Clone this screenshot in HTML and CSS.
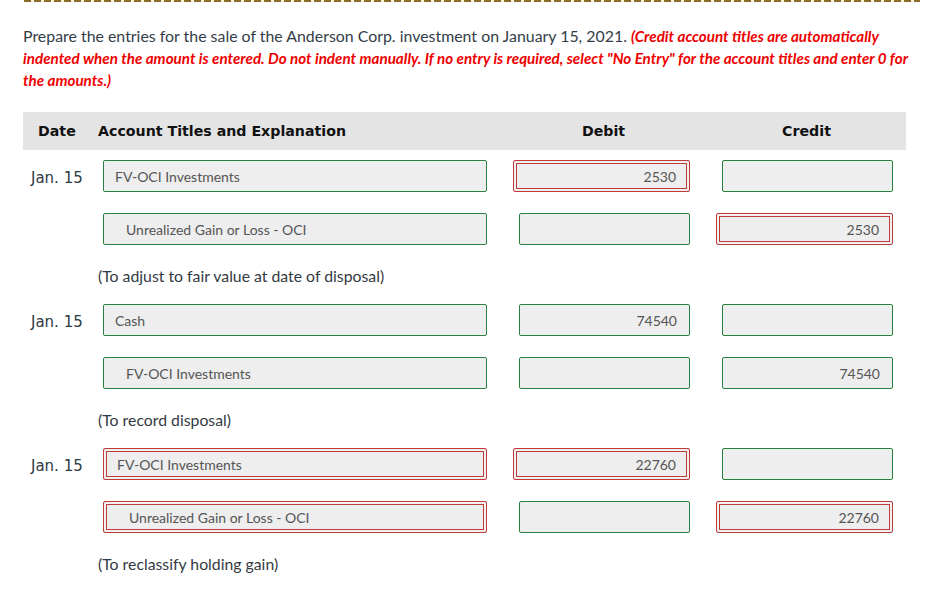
FILE: index.html
```html
<!DOCTYPE html>
<html>
<head>
<meta charset="utf-8">
<link rel="stylesheet" href="styles.css">
</head>
<body>
<div class="dashline"></div>
<div class="page">
  <p class="prompt">Prepare the entries for the sale of the Anderson Corp. investment on January 15, 2021. <em>(Credit account titles are automatically indented when the amount is entered. Do not indent manually. If no entry is required, select "No Entry" for the account titles and enter 0 for the amounts.)</em></p>

  <div class="thead">
    <div class="th-date">Date</div>
    <div class="th-acct">Account Titles and Explanation</div>
    <div class="th-amt">Debit</div>
    <div class="th-amt">Credit</div>
  </div>

  <div class="entry first">
    <div class="row">
      <div class="date">Jan. 15</div>
      <div class="field acct ok">FV-OCI Investments</div>
      <div class="field amt bad">2530</div>
      <div class="field amt ok"></div>
    </div>
    <div class="row">
      <div class="date"></div>
      <div class="field acct ok indent">Unrealized Gain or Loss - OCI</div>
      <div class="field amt ok"></div>
      <div class="field amt bad">2530</div>
    </div>
    <div class="note">(To adjust to fair value at date of disposal)</div>
  </div>

  <div class="entry">
    <div class="row">
      <div class="date">Jan. 15</div>
      <div class="field acct ok">Cash</div>
      <div class="field amt ok">74540</div>
      <div class="field amt ok"></div>
    </div>
    <div class="row">
      <div class="date"></div>
      <div class="field acct ok indent">FV-OCI Investments</div>
      <div class="field amt ok"></div>
      <div class="field amt ok">74540</div>
    </div>
    <div class="note">(To record disposal)</div>
  </div>

  <div class="entry">
    <div class="row">
      <div class="date">Jan. 15</div>
      <div class="field acct bad">FV-OCI Investments</div>
      <div class="field amt bad">22760</div>
      <div class="field amt ok"></div>
    </div>
    <div class="row">
      <div class="date"></div>
      <div class="field acct bad indent">Unrealized Gain or Loss - OCI</div>
      <div class="field amt ok"></div>
      <div class="field amt bad">22760</div>
    </div>
    <div class="note">(To reclassify holding gain)</div>
  </div>
</div>
</body>
</html>
```

FILE: styles.css
```css
html, body {
  margin: 0;
  padding: 0;
  background: #ffffff;
}

.dashline {
  margin-left: 24px;
  width: 896px;
  height: 2px;
  background: repeating-linear-gradient(to right, #8b6c2d 0 7px, #fbf3d8 7px 10px);
}

.page {
  padding-left: 23px;
  width: 883px;
}

.prompt {
  margin: 23px -20px 21px 0;
  font-family: Lato, "Liberation Sans", sans-serif;
  font-size: 15.9px;
  line-height: 22px;
  color: #333d47;
}

.prompt em {
  color: #ee0000;
  font-weight: bold;
  font-style: italic;
  font-size: 15.2px;
}

.thead {
  display: grid;
  grid-template-columns: 75px 389px 203px 203px;
  height: 38px;
  align-items: center;
  background: #e4e4e4;
  font-family: "DejaVu Sans", Verdana, sans-serif;
  font-weight: bold;
  font-size: 14.2px;
  color: #111;
}

.th-date {
  padding-left: 15px;
}

.th-amt {
  justify-self: end;
  width: 171px;
  padding-right: 1px;
  text-align: center;
}

.entry {
  padding-top: 0;
}

.entry.first {
  padding-top: 10px;
}

.row {
  display: grid;
  grid-template-columns: 80px 384px 203px 203px;
  height: 32px;
  margin-bottom: 21px;
  align-items: center;
}

.date {
  padding-left: 8px;
  padding-top: 3px;
  font-family: "DejaVu Sans", Verdana, sans-serif;
  font-size: 15px;
  color: #2e3a44;
}

.field {
  box-sizing: border-box;
  height: 32px;
  display: flex;
  align-items: center;
  background: #eeeeee;
  border-radius: 2px;
  font-family: Lato, "Liberation Sans", sans-serif;
  font-size: 14px;
  color: #555555;
}

.field.ok {
  border: 1px solid #2a8040;
}

.field.bad {
  border: 1px solid #c23b3b;
  box-shadow: inset 0 0 0 2px #f1f1f1, inset 0 0 0 3px #c23b3b;
}

.acct {
  padding-left: 11px;
}

.acct.bad {
  padding-left: 13px;
}

.acct.indent {
  padding-left: 22px;
}

.acct.bad.indent {
  padding-left: 25px;
}

.amt {
  justify-self: end;
  width: 171px;
  justify-content: flex-end;
  padding-right: 12px;
  font-size: 14px;
}

.amt.bad {
  width: 177px;
  padding-right: 13px;
}

.note {
  height: 20px;
  line-height: 20px;
  margin-bottom: 18px;
  padding-left: 75px;
  font-family: Lato, "Liberation Sans", sans-serif;
  font-size: 15.8px;
  color: #333a42;
}
```
